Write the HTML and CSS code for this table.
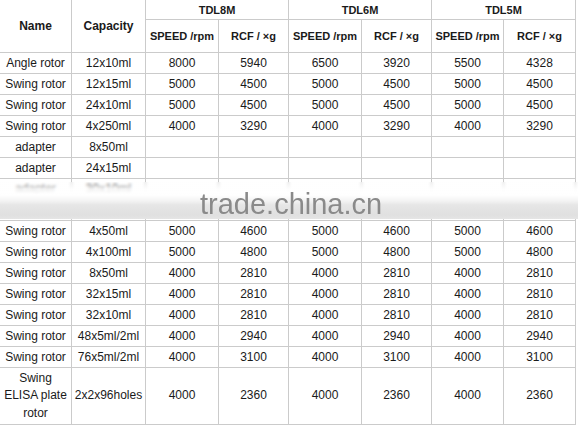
FILE: index.html
```html
<!DOCTYPE html>
<html>
<head>
<meta charset="utf-8">
<link rel="stylesheet" href="styles.css">
</head>
<body>
<div class="sheet">
<table class="spec">
<colgroup>
<col class="c-name"><col class="c-cap"><col class="c-s8"><col class="c-r8"><col class="c-s6"><col class="c-r6"><col class="c-s5"><col class="c-r5">
</colgroup>
<thead>
<tr class="h1">
<th rowspan="2" class="big">Name</th>
<th rowspan="2" class="big">Capacity</th>
<th colspan="2">TDL8M</th>
<th colspan="2">TDL6M</th>
<th colspan="2">TDL5M</th>
</tr>
<tr class="h2">
<th>SPEED /rpm</th><th>RCF / ×g</th>
<th>SPEED /rpm</th><th>RCF / ×g</th>
<th>SPEED /rpm</th><th>RCF / ×g</th>
</tr>
</thead>
<tbody>
<tr><td>Angle rotor</td><td>12x10ml</td><td>8000</td><td>5940</td><td>6500</td><td>3920</td><td>5500</td><td>4328</td></tr>
<tr><td>Swing rotor</td><td>12x15ml</td><td>5000</td><td>4500</td><td>5000</td><td>4500</td><td>5000</td><td>4500</td></tr>
<tr><td>Swing rotor</td><td>24x10ml</td><td>5000</td><td>4500</td><td>5000</td><td>4500</td><td>5000</td><td>4500</td></tr>
<tr><td>Swing rotor</td><td>4x250ml</td><td>4000</td><td>3290</td><td>4000</td><td>3290</td><td>4000</td><td>3290</td></tr>
<tr><td>adapter</td><td>8x50ml</td><td></td><td></td><td></td><td></td><td></td><td></td></tr>
<tr><td>adapter</td><td>24x15ml</td><td></td><td></td><td></td><td></td><td></td><td></td></tr>
<tr><td>adapter</td><td>30x10ml</td><td></td><td></td><td></td><td></td><td></td><td></td></tr>
<tr><td></td><td></td><td></td><td></td><td></td><td></td><td></td><td></td></tr>
<tr><td>Swing rotor</td><td>4x50ml</td><td>5000</td><td>4600</td><td>5000</td><td>4600</td><td>5000</td><td>4600</td></tr>
<tr><td>Swing rotor</td><td>4x100ml</td><td>5000</td><td>4800</td><td>5000</td><td>4800</td><td>5000</td><td>4800</td></tr>
<tr><td>Swing rotor</td><td>8x50ml</td><td>4000</td><td>2810</td><td>4000</td><td>2810</td><td>4000</td><td>2810</td></tr>
<tr><td>Swing rotor</td><td>32x15ml</td><td>4000</td><td>2810</td><td>4000</td><td>2810</td><td>4000</td><td>2810</td></tr>
<tr><td>Swing rotor</td><td>32x10ml</td><td>4000</td><td>2810</td><td>4000</td><td>2810</td><td>4000</td><td>2810</td></tr>
<tr><td>Swing rotor</td><td>48x5ml/2ml</td><td>4000</td><td>2940</td><td>4000</td><td>2940</td><td>4000</td><td>2940</td></tr>
<tr><td>Swing rotor</td><td>76x5ml/2ml</td><td>4000</td><td>3100</td><td>4000</td><td>3100</td><td>4000</td><td>3100</td></tr>
<tr class="tall"><td>Swing<br>ELISA plate<br>rotor</td><td>2x2x96holes</td><td>4000</td><td>2360</td><td>4000</td><td>2360</td><td>4000</td><td>2360</td></tr>
</tbody>
</table>
<div class="watermark"><span class="wm-text">trade.china.cn</span></div>
</div>
</body>
</html>
```
FILE: styles.css
```css
html, body {
  margin: 0;
  padding: 0;
  background: #fff;
}
.sheet {
  position: relative;
  width: 578px;
  height: 427px;
  overflow: hidden;
}
.spec {
  border-collapse: collapse;
  table-layout: fixed;
  width: 577px;
  margin: -1px 0 0 -1px;
  font-family: "Liberation Sans", Arial, sans-serif;
  font-size: 12px;
  color: #1a1a1a;
}
.c-name { width: 72px; }
.c-cap { width: 74px; }
.c-s8 { width: 73px; }
.c-r8 { width: 70px; }
.c-s6 { width: 73px; }
.c-r6 { width: 70px; }
.c-s5 { width: 72px; }
.c-r5 { width: 72px; }
.spec th, .spec td {
  border: 1px solid #cbcbcb;
  padding: 0;
  text-align: center;
  vertical-align: middle;
  line-height: 18px;
  white-space: nowrap;
  overflow: hidden;
}
.spec th {
  font-weight: bold;
  font-size: 11px;
}
.spec th.big {
  font-size: 12px;
}
.h1 th { height: 19px; }
.h2 th { height: 32px; }
.spec tbody td { height: 20px; }
.spec tbody tr.tall td { height: 56px; line-height: 17.5px; }
.watermark {
  position: absolute;
  left: 0;
  top: 182px;
  width: 578px;
  height: 37px;
  background: linear-gradient(to bottom,
    rgba(255,255,255,0) 0px,
    rgba(255,255,255,0.85) 7px,
    #ffffff 13px,
    #f3f3f3 19px,
    #e6e6e6 23px,
    #e0e0e0 33px,
    #e5e5e5 37px);
  -webkit-backdrop-filter: blur(1.5px);
  backdrop-filter: blur(1.5px);
}
.wm-text {
  display: block;
  padding: 8px 0 0 200px;
  font-family: "Liberation Sans", Arial, sans-serif;
  font-size: 29px;
  line-height: 29px;
  color: #8a8a8a;
}
```
